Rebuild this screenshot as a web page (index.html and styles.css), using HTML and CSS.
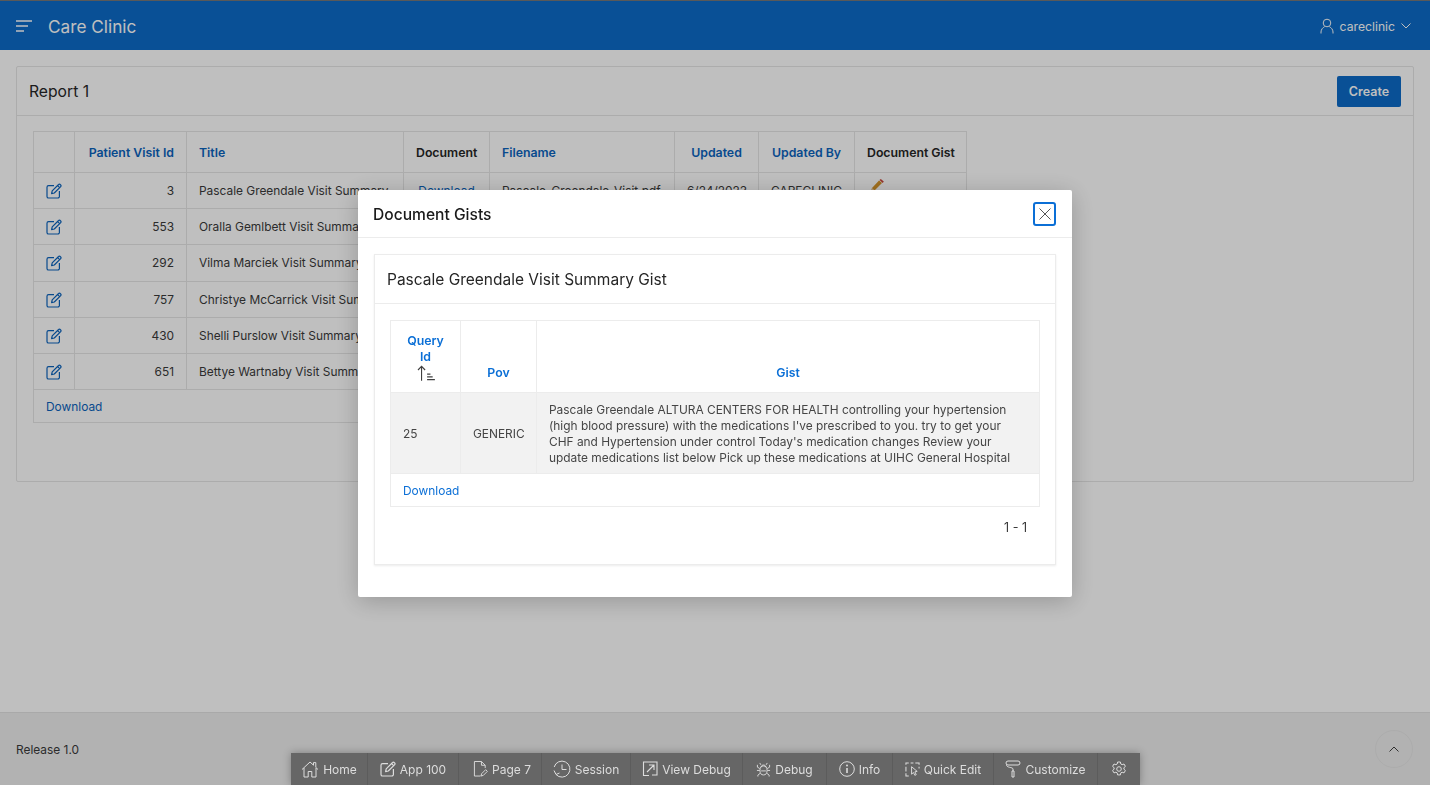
FILE: index.html
```html
<!DOCTYPE html>
<html lang="en">
<head>
  <meta charset="UTF-8" />
  <meta name="viewport" content="width=device-width, initial-scale=1.0" />
  <title>Care Clinic</title>
  <link rel="stylesheet" href="styles.css">
</head>
<body>
  <svg class="sprites" width="0" height="0" aria-hidden="true">
    <symbol id="i-edit" viewBox="0 0 16 16">
      <path d="M8 2.600H2.600A1.600 1.600 0 0 0 1 4.200v9.200A1.600 1.600 0 0 0 2.600 15h9.200a1.600 1.600 0 0 0 1.600-1.600V8" fill="none" stroke="currentColor" stroke-width="1.200"/>
      <path d="M5.600 10.600l.6-2.700L12.600 1.500a1.100 1.100 0 0 1 1.600 0l.5.5a1.100 1.100 0 0 1 0 1.600L8.300 10z M11.600 2.600l2 2" fill="none" stroke="currentColor" stroke-width="1.200" stroke-linejoin="round"/>
    </symbol>
  </svg>

  <header class="topbar">
    <div class="brand">
      <svg class="menu-icon" viewBox="0 0 16 12" width="16" height="12">
        <path d="M0 1h16M0 6h12M0 11h8" stroke="currentColor" stroke-width="1.700" fill="none"/>
      </svg>
      <span class="app-name">Care Clinic</span>
    </div>
    <div class="user">
      <svg viewBox="0 0 14 16" width="14" height="16">
        <circle cx="7" cy="5" r="3.800" fill="none" stroke="currentColor" stroke-width="1"/>
        <path d="M1 15.500v-1.500c0-2.600 2-4.500 3.600-5.300M13 15.500v-1.500c0-2.600-2-4.500-3.600-5.300" fill="none" stroke="currentColor" stroke-width="1"/>
      </svg>
      <span>careclinic</span>
      <svg viewBox="0 0 10 6" width="10" height="6">
        <path d="M.5.500L5 5l4.500-4.500" fill="none" stroke="currentColor" stroke-width="1"/>
      </svg>
    </div>
  </header>

  <main class="content">
    <section class="card">
      <div class="card-head">
        <h2>Report 1</h2>
        <button class="btn-create">Create</button>
      </div>
      <div class="card-body">
        <table class="report">
          <colgroup>
            <col class="c-edit"><col class="c-id"><col class="c-title"><col class="c-doc"><col class="c-file"><col class="c-upd"><col class="c-by"><col class="c-gist">
          </colgroup>
          <thead>
            <tr>
              <th></th>
              <th class="num"><a href="#">Patient Visit Id</a></th>
              <th class="left"><a href="#">Title</a></th>
              <th>Document</th>
              <th class="left"><a href="#">Filename</a></th>
              <th><a href="#">Updated</a></th>
              <th><a href="#">Updated By</a></th>
              <th>Document Gist</th>
            </tr>
          </thead>
          <tbody>
            <tr>
              <td class="edit"><svg width="16" height="16"><use href="#i-edit"/></svg></td>
              <td class="num">3</td>
              <td>Pascale Greendale Visit Summary</td>
              <td class="mid"><a href="#">Download</a></td>
              <td>Pascale-Greendale-Visit.pdf</td>
              <td class="mid">6/24/2023</td>
              <td class="mid">CARECLINIC</td>
              <td class="pencil-cell">
                <svg viewBox="0 0 14 14" width="14" height="14">
                  <path d="M1 13l1-4 7-7.500 3 2.500-7 7z" fill="#d6952a"/>
                  <path d="M9.500 1l1.300-1 3 2.600-1.100 1.300z" fill="#c8473c"/>
                  <path d="M1 13l1-4 3 2.500z" fill="#e6c9a0"/>
                </svg>
              </td>
            </tr>
            <tr>
              <td class="edit"><svg width="16" height="16"><use href="#i-edit"/></svg></td>
              <td class="num">553</td>
              <td>Oralla Gemlbett Visit Summary</td>
              <td class="mid"><a href="#">Download</a></td><td></td><td></td><td></td><td></td>
            </tr>
            <tr>
              <td class="edit"><svg width="16" height="16"><use href="#i-edit"/></svg></td>
              <td class="num">292</td>
              <td>Vilma Marciek Visit Summary</td>
              <td class="mid"><a href="#">Download</a></td><td></td><td></td><td></td><td></td>
            </tr>
            <tr>
              <td class="edit"><svg width="16" height="16"><use href="#i-edit"/></svg></td>
              <td class="num">757</td>
              <td>Christye McCarrick Visit Summary</td>
              <td class="mid"><a href="#">Download</a></td><td></td><td></td><td></td><td></td>
            </tr>
            <tr>
              <td class="edit"><svg width="16" height="16"><use href="#i-edit"/></svg></td>
              <td class="num">430</td>
              <td>Shelli Purslow Visit Summary</td>
              <td class="mid"><a href="#">Download</a></td><td></td><td></td><td></td><td></td>
            </tr>
            <tr>
              <td class="edit"><svg width="16" height="16"><use href="#i-edit"/></svg></td>
              <td class="num">651</td>
              <td>Bettye Wartnaby Visit Summary</td>
              <td class="mid"><a href="#">Download</a></td><td></td><td></td><td></td><td></td>
            </tr>
          </tbody>
          <tfoot>
            <tr><td colspan="8" class="dl-row"><a href="#">Download</a></td></tr>
          </tfoot>
        </table>
      </div>
    </section>
  </main>

  <footer class="page-foot">
    <span>Release 1.0</span>
    <button class="to-top" aria-label="Top">
      <svg viewBox="0 0 10 6" width="10" height="6"><path d="M.5 5.500L5 1l4.500 4.500" fill="none" stroke="currentColor" stroke-width="1"/></svg>
    </button>
  </footer>

  <nav class="devbar">
    <a href="#" class="dev-home">
      <svg viewBox="0 0 18 18" width="18" height="18"><path d="M1 9.500L9 2l3.500 3.200V2.600h2.300v4.800L17 9.500M3 8v9h4.200v-5.500h3.600V17H15V8" fill="none" stroke="currentColor" stroke-width="1"/></svg>
      Home
    </a>
    <a href="#" class="dev-app">
      <svg viewBox="0 0 16 16" width="16" height="16"><use href="#i-edit"/></svg>
      App 100
    </a>
    <a href="#" class="dev-page">
      <svg viewBox="0 0 16 18" width="15" height="18"><path d="M8 16.500H1.500V1H9l4 4v3M9 1v4h4M8.500 16.500l.7-2.500 4.300-4.300 1.800 1.800-4.300 4.300z" fill="none" stroke="currentColor" stroke-width="1"/></svg>
      Page 7
    </a>
    <a href="#" class="dev-session">
      <svg viewBox="0 0 18 18" width="18" height="18"><path d="M3 14.500A8 8 0 1 0 1.200 7M1 10.500l2 4 3.500-1.500M9 4.500V9.500h4.500" fill="none" stroke="currentColor" stroke-width="1"/></svg>
      Session
    </a>
    <a href="#" class="dev-view">
      <svg viewBox="0 0 16 16" width="16" height="16"><path d="M3 1h12v13H10M3 1H1.500v13.500H7M5 11l7-7M7 4h5v5" fill="none" stroke="currentColor" stroke-width="1.100"/></svg>
      View Debug
    </a>
    <a href="#" class="dev-debug">
      <svg viewBox="0 0 16 16" width="15" height="15"><ellipse cx="8" cy="9" rx="3.800" ry="4.800" fill="none" stroke="currentColor" stroke-width="1"/><path d="M5.500 5.500c0-3 5-3 5 0M5.500 9.500h5M4 7L1.500 5.500V3M12 7l2.500-1.500V3M4 9H1M12 9h3M4.500 12l-2.500 2v1.500M11.500 12l2.500 2v1.500M5.200 3L4 1M10.800 3L12 1" fill="none" stroke="currentColor" stroke-width="1"/></svg>
      Debug
    </a>
    <a href="#" class="dev-info">
      <svg viewBox="0 0 16 16" width="16" height="16"><circle cx="8" cy="8" r="7.300" fill="none" stroke="currentColor" stroke-width="1"/><path d="M8 7v5" stroke="currentColor" stroke-width="1.600"/><circle cx="8" cy="4.500" r="1" fill="currentColor"/></svg>
      Info
    </a>
    <a href="#" class="dev-quick">
      <svg viewBox="0 0 16 16" width="15" height="15"><path d="M1 3V1h3M6 1h3M11 1h4v2M15 5v2M1 5v5M1 12v3h3" fill="none" stroke="currentColor" stroke-width="1.100"/><path d="M7 5l6 5-2.500.5 1.500 3-1.500.7-1.500-3-2 1.800z" fill="none" stroke="currentColor" stroke-width="1"/></svg>
      Quick Edit
    </a>
    <a href="#" class="dev-custom">
      <svg viewBox="0 0 16 18" width="16" height="18"><rect x="1" y="1" width="14" height="4" rx="2" fill="none" stroke="currentColor" stroke-width="1"/><path d="M1.500 4.500C1 8 8 7 8 9v2M7 11h2v6H7z" fill="none" stroke="currentColor" stroke-width="1"/></svg>
      Customize
    </a>
    <a href="#" class="dev-gear" aria-label="Settings">
      <svg viewBox="0 0 16 16" width="16" height="16"><circle cx="8" cy="8" r="2.300" fill="none" stroke="currentColor" stroke-width="1"/><path d="M6.600 1h2.800l.4 2 1.300.7 1.900-.7 1.400 2.400-1.500 1.300v1.500l1.500 1.300-1.400 2.400-1.900-.7-1.300.7-.4 2H6.600l-.4-2-1.300-.7-1.900.7-1.400-2.400 1.500-1.300V6.700L1.600 5.400 3 3l1.900.7 1.300-.7z" fill="none" stroke="currentColor" stroke-width="1" stroke-linejoin="round"/></svg>
    </a>
  </nav>

  <div class="scrim"></div>

  <div class="modal" role="dialog">
    <div class="modal-head">
      <h3>Document Gists</h3>
      <button class="modal-close" aria-label="Close">
        <svg viewBox="0 0 12 12" width="12" height="12"><path d="M.5.500l11 11M11.500.500l-11 11" stroke="currentColor" stroke-width="1" fill="none"/></svg>
      </button>
    </div>
    <div class="modal-body">
      <section class="gist-card">
        <h4>Pascale Greendale Visit Summary Gist</h4>
        <div class="gist-body">
          <table class="gist">
            <colgroup><col class="g-id"><col class="g-pov"><col class="g-text"></colgroup>
            <thead>
              <tr>
                <th>
                  <a href="#">Query Id</a>
                  <svg class="sort" viewBox="0 0 18 14" width="20" height="16"><path d="M5 14V1M1.800 4.300L5 1l3.200 3.300M10 8h3M10 10.500h5M10 13h7" fill="none" stroke="currentColor" stroke-width="1"/></svg>
                </th>
                <th><a href="#">Pov</a></th>
                <th><a href="#">Gist</a></th>
              </tr>
            </thead>
            <tbody>
              <tr>
                <td>25</td>
                <td>GENERIC</td>
                <td>Pascale Greendale ALTURA CENTERS FOR HEALTH controlling your hypertension (high blood pressure) with the medications I've prescribed to you. try to get your CHF and Hypertension under control Today's medication changes Review your update medications list below Pick up these medications at UIHC General Hospital</td>
              </tr>
            </tbody>
            <tfoot>
              <tr><td colspan="3" class="gist-dl"><a href="#">Download</a></td></tr>
            </tfoot>
          </table>
          <div class="pager">1 - 1</div>
        </div>
      </section>
    </div>
  </div>
</body>
</html>
```

FILE: styles.css
```css
* {
  box-sizing: border-box;
}

body {
  display: flex;
  flex-direction: column;
  height: 785px;
  margin: 0;
  overflow: hidden;
  background: #fff;
  color: #3a3a3a;
  font-family: "Inter", "Liberation Sans", sans-serif;
  font-size: 11.9px;
}

a {
  color: #0b63bd;
  text-decoration: none;
}

.sprites {
  position: absolute;
}

/* top bar */
.topbar {
  display: flex;
  justify-content: space-between;
  align-items: center;
  height: 50px;
  padding: 1px 19px 0 16px;
  background: #0d6bc8;
  border-top: 1px solid #777;
  color: #fff;
}

.brand {
  display: flex;
  align-items: center;
  gap: 16px;
}

.app-name {
  font-size: 17.200px;
}

.user {
  display: flex;
  align-items: center;
  gap: 6px;
  font-size: 12.2px;
}

/* report region */
.content {
  flex: 1;
  padding: 16px;
}

.card {
  height: 416px;
  background: #fff;
  border: 1px solid #e6e6e6;
  border-radius: 2px;
}

.card-head {
  display: flex;
  justify-content: space-between;
  align-items: center;
  height: 49px;
  padding: 0 12px;
  border-bottom: 1px solid #e6e6e6;
}

.card-head h2 {
  margin: 0;
  color: #262626;
  font-size: 15.700px;
  font-weight: 400;
}

.btn-create {
  width: 64px;
  height: 31px;
  padding: 0;
  border: 0;
  border-radius: 2px;
  background: #0d6bc8;
  color: #fff;
  font: 600 12.500px "Inter", sans-serif;
}

.card-body {
  padding: 15px 16px 16px;
}

.report {
  table-layout: fixed;
  width: 933px;
  border-collapse: collapse;
}

.c-edit { width: 41px; }
.c-id { width: 112px; }
.c-title { width: 217px; }
.c-doc { width: 86px; }
.c-file { width: 185px; }
.c-upd { width: 84px; }
.c-by { width: 96px; }
.c-gist { width: 112px; }

.report th,
.report td {
  border: 1px solid #e6e6e6;
  padding: 0 12px;
  white-space: nowrap;
  overflow: hidden;
}

.report th {
  height: 41px;
  font-size: 12.300px;
  font-weight: 600;
  text-align: center;
  color: #262626;
}

.report th a {
  font-weight: 600;
}

.report td {
  height: 36.200px;
}

.report .num {
  text-align: right;
}

.report .left {
  text-align: left;
}

.report .mid {
  text-align: center;
}

.report .edit {
  padding: 0;
  text-align: center;
  color: #0b63bd;
}

.report svg {
  display: inline-block;
  vertical-align: middle;
}

.report .pencil-cell {
  padding: 0 0 10px 15px;
  overflow: visible;
}

.report .dl-row {
  height: 33px;
}

/* footer */
.page-foot {
  display: flex;
  justify-content: space-between;
  align-items: center;
  height: 73px;
  padding: 0 17px 0 16px;
  background: #eee;
  border-top: 1px solid #e2e2e2;
}

.to-top {
  display: flex;
  justify-content: center;
  align-items: center;
  width: 38px;
  height: 38px;
  padding: 0;
  border: 1px solid #e6e6e6;
  border-radius: 50%;
  background: #eee;
  color: #404040;
}

/* developer toolbar */
.devbar {
  position: fixed;
  z-index: 2;
  bottom: 0;
  left: 291px;
  display: flex;
  width: 849px;
  height: 32px;
  background: #666;
  box-shadow: 0 0 8px rgba(0, 0, 0, 0.3);
}

.devbar a {
  display: flex;
  align-items: center;
  justify-content: center;
  gap: 4px;
  border-right: 1px solid #5c5c5c;
  color: #ddd;
  font-size: 12px;
}

.devbar a:last-child {
  border-right: 0;
}

.dev-home { width: 77px; }
.dev-app { width: 91px; }
.dev-page { width: 83px; padding-left: 4px; }
.dev-session { width: 89px; }
.dev-view { width: 112px; }
.dev-debug { width: 84px; }
.dev-info { width: 66px; }
.dev-quick { width: 101px; }
.dev-custom { width: 104px; }
.dev-gear { width: 42px; }

/* dialog */
.scrim {
  position: fixed;
  z-index: 1;
  inset: 0;
  background: rgba(0, 0, 0, 0.25);
}

.modal {
  position: fixed;
  z-index: 3;
  top: 190px;
  left: 358px;
  width: 714px;
  height: 407px;
  border-radius: 2px;
  background: #fff;
  box-shadow: 0 4px 24px rgba(0, 0, 0, 0.22);
}

.modal-head {
  display: flex;
  justify-content: space-between;
  align-items: center;
  height: 48px;
  padding: 0 16px 0 15px;
  border-bottom: 1px solid #ececec;
}

.modal-head h3 {
  margin: 1px 0 0;
  color: #1a1a1a;
  font-size: 15.600px;
  font-weight: 500;
}

.modal-close {
  display: flex;
  justify-content: center;
  align-items: center;
  width: 23px;
  height: 24px;
  padding: 0;
  border: 2px solid #0b6fd6;
  border-radius: 3px;
  background: #fff;
  color: #555;
}

.modal-body {
  padding: 16px;
}

.gist-card {
  height: 311px;
  border: 1px solid #ececec;
  box-shadow: 0 1px 2px rgba(0, 0, 0, 0.08);
}

.gist-card h4 {
  display: flex;
  align-items: center;
  height: 49px;
  margin: 0;
  padding: 0 12px;
  border-bottom: 1px solid #ececec;
  color: #262626;
  font-size: 15.500px;
  font-weight: 400;
}

.gist-body {
  padding: 16px 15px;
}

.gist {
  table-layout: fixed;
  width: 649px;
  border-collapse: collapse;
}

.g-id { width: 70px; }
.g-pov { width: 76px; }
.g-text { width: 503px; }

.gist th,
.gist td {
  border: 1px solid #ececec;
  padding: 0 12px;
}

.gist th {
  height: 72px;
  padding-bottom: 11px;
  vertical-align: bottom;
  text-align: center;
  font-size: 12.300px;
  line-height: 16px;
}

.gist th a {
  color: #0b6fd6;
  font-weight: 600;
}

.gist .sort {
  display: block;
  margin: 0 auto;
  color: #404040;
}

.gist tbody td {
  height: 81px;
  padding-top: 1px;
  background: #f2f2f2;
  color: #454545;
  line-height: 16px;
}

.gist td:nth-child(2) {
  text-align: center;
}

.gist .gist-dl {
  height: 33px;
  background: #fff;
  text-align: left;
}

.gist-dl a {
  color: #0b6fd6;
}

.pager {
  padding: 13px 13px 0;
  text-align: right;
  font-size: 12.500px;
}
```
